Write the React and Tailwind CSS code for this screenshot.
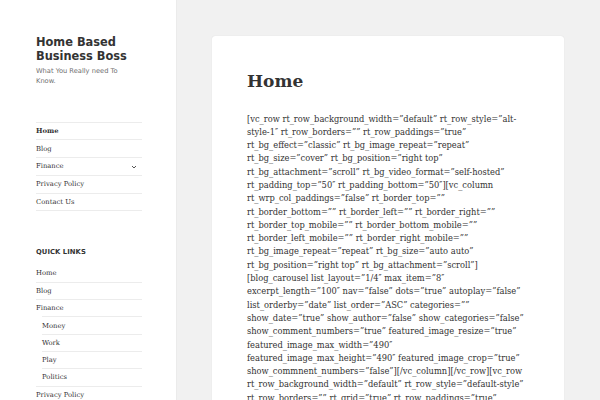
import React from "react";

const serif = { fontFamily: '"DejaVu Serif", serif' };
const sans = { fontFamily: '"DejaVu Sans", sans-serif' };

const body = [
  "[vc_row rt_row_background_width=\u201ddefault\u201d rt_row_style=\u201dalt-",
  "style-1\u2033 rt_row_borders=\u201d\u201d rt_row_paddings=\u201dtrue\u201d",
  "rt_bg_effect=\u201dclassic\u201d rt_bg_image_repeat=\u201drepeat\u201d",
  "rt_bg_size=\u201dcover\u201d rt_bg_position=\u201dright top\u201d",
  "rt_bg_attachment=\u201dscroll\u201d rt_bg_video_format=\u201dself-hosted\u201d",
  "rt_padding_top=\u201d50\u2033 rt_padding_bottom=\u201d50\u2033][vc_column",
  "rt_wrp_col_paddings=\u201dfalse\u201d rt_border_top=\u201d\u201d",
  "rt_border_bottom=\u201d\u201d rt_border_left=\u201d\u201d rt_border_right=\u201d\u201d",
  "rt_border_top_mobile=\u201d\u201d rt_border_bottom_mobile=\u201d\u201d",
  "rt_border_left_mobile=\u201d\u201d rt_border_right_mobile=\u201d\u201d",
  "rt_bg_image_repeat=\u201drepeat\u201d rt_bg_size=\u201dauto auto\u201d",
  "rt_bg_position=\u201dright top\u201d rt_bg_attachment=\u201dscroll\u201d]",
  "[blog_carousel list_layout=\u201d1/4\u2033 max_item=\u201d8\u2033",
  "excerpt_length=\u201d100\u2033 nav=\u201dfalse\u201d dots=\u201dtrue\u201d autoplay=\u201dfalse\u201d",
  "list_orderby=\u201ddate\u201d list_order=\u201dASC\u201d categories=\u201d\u201d",
  "show_date=\u201dtrue\u201d show_author=\u201dfalse\u201d show_categories=\u201dfalse\u201d",
  "show_comment_numbers=\u201dtrue\u201d featured_image_resize=\u201dtrue\u201d",
  "featured_image_max_width=\u201d490\u2033",
  "featured_image_max_height=\u201d490\u2033 featured_image_crop=\u201dtrue\u201d",
  "show_commnent_numbers=\u201dfalse\u201d][/vc_column][/vc_row][vc_row",
  "rt_row_background_width=\u201ddefault\u201d rt_row_style=\u201ddefault-style\u201d",
  "rt_row_borders=\u201d\u201d rt_grid=\u201dtrue\u201d rt_row_paddings=\u201dtrue\u201d",
];

function Chevron() {
  return (
    <svg width="6" height="4" viewBox="0 0 6 4" className="text-[#555]">
      <path d="M1 1 L3 3 L5 1" fill="none" stroke="currentColor" strokeWidth="1" />
    </svg>
  );
}

function NavRow({ children, bold, chevron, last }) {
  return (
    <li
      className={`flex h-[17.8px] items-center justify-between border-t border-[#ececec] text-[6.8px] text-[#333] ${
        bold ? "font-bold" : ""
      } ${last ? "border-b" : ""}`}
      style={serif}
    >
      <span>{children}</span>
      {chevron && (
        <span className="pr-[5px]">
          <Chevron />
        </span>
      )}
    </li>
  );
}

function QRow({ children, first, indent }) {
  return (
    <li
      className={`flex h-[17.3px] items-center text-[6.8px] text-[#333] ${
        first ? "" : "border-t border-[#ececec]"
      } ${indent ? "ml-[6px]" : ""}`}
      style={serif}
    >
      {children}
    </li>
  );
}

export default function App() {
  return (
    <div className="flex h-[400px] w-[600px] overflow-hidden bg-[#f1f1f1]">
      <aside className="w-[176px] shrink-0 bg-white pl-[36px] pr-[34px] pt-[35px] shadow-[0_0_1px_rgba(0,0,0,0.15)]">
        <h1 className="text-[11.4px] font-bold leading-[14.3px] text-[#333]" style={sans}>
          Home Based
          <br />
          Business Boss
        </h1>
        <p className="mt-[2px] text-[6.7px] leading-[10px] text-[#707070]" style={sans}>
          What You Really need To
          <br />
          Know.
        </p>
        <ul className="mt-[36px]">
          <NavRow bold>Home</NavRow>
          <NavRow>Blog</NavRow>
          <NavRow chevron>Finance</NavRow>
          <NavRow>Privacy Policy</NavRow>
          <NavRow last>Contact Us</NavRow>
        </ul>
        <h2
          className="mt-[35px] text-[6.8px] font-bold uppercase leading-[12px] tracking-[0.01em] text-[#333]"
          style={sans}
        >
          Quick Links
        </h2>
        <ul className="mt-[7px]">
          <QRow first>Home</QRow>
          <QRow>Blog</QRow>
          <QRow>Finance</QRow>
          <QRow indent>Money</QRow>
          <QRow indent>Work</QRow>
          <QRow indent>Play</QRow>
          <QRow indent>Politics</QRow>
          <QRow>Privacy Policy</QRow>
        </ul>
      </aside>
      <main className="flex-1 px-[36px] pt-[36px]">
        <article className="h-[400px] rounded-[3px] bg-white px-[35px] pt-[35px] shadow-[0_0_1px_rgba(0,0,0,0.15)]">
          <h1 className="text-[17px] font-bold leading-[20px] text-[#333]" style={serif}>
            Home
          </h1>
          <div className="mt-[21.5px] text-[8.3px] leading-[13.3px] text-[#333]" style={serif}>
            {body.map((l, i) => (
              <div key={i} className="whitespace-nowrap">
                {l}
              </div>
            ))}
          </div>
        </article>
      </main>
    </div>
  );
}
